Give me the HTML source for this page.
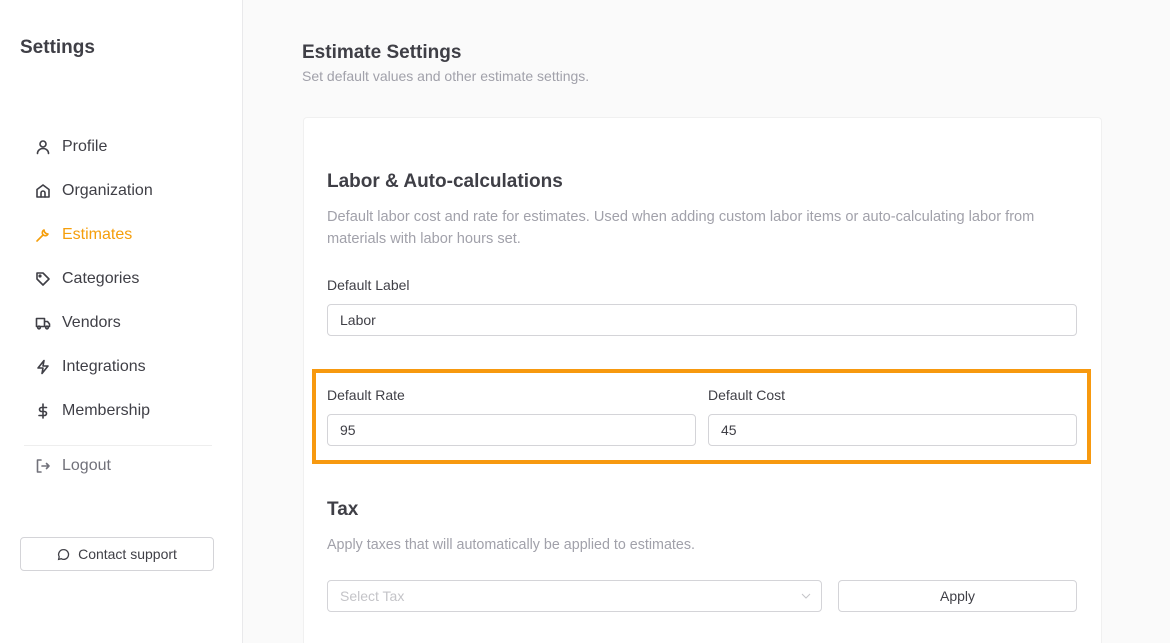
<!DOCTYPE html>
<html style="overflow:hidden;height:643px"><head><style>
*{box-sizing:border-box;margin:0;padding:0}
body{width:1170px;height:643px;overflow:hidden;font-family:"Liberation Sans",sans-serif;background:#fafafa;position:relative;color:#3f3f46}
.side{position:absolute;left:0;top:0;width:243px;height:643px;background:#fff;border-right:1px solid #e9e9eb}
.side h1{position:absolute;left:20px;top:37px;font-size:19px;font-weight:700;color:#3f3f46}
.nav{position:absolute;left:35px;font-size:16px;color:#3f3f46;display:flex;align-items:center}
.nav svg{width:16px;height:16px;margin-right:11px;fill:none;stroke:currentColor;stroke-width:1.6;stroke-linecap:round;stroke-linejoin:round}
.act{color:#f59e0b}
.sep{position:absolute;left:24px;top:445px;width:188px;border-top:1px solid #eee}
.btn{position:absolute;left:20px;top:537px;width:194px;height:34px;border:1px solid #d4d4d8;border-radius:4px;font-size:14px;display:flex;align-items:center;justify-content:center;color:#3f3f46}
.t{position:absolute}
.card{position:absolute;left:303px;top:117px;width:799px;height:526px;background:#fff;border:1px solid #f0f0f0;border-bottom:none;border-radius:4px 4px 0 0}
.inp{position:absolute;height:32px;border:1px solid #d4d4d8;border-radius:4px;font-size:14px;padding-left:12px;display:flex;align-items:center;color:#3f3f46;background:#fff}
.lbl{position:absolute;font-size:14px;color:#3f3f46}
</style></head><body>
<div class="side">
<h1>Settings</h1>
<div class="nav" style="top:138px"><svg viewBox="0 0 16 16"><circle cx="8" cy="5" r="3"/><path d="M2.5 14.5c0-3 2.5-5 5.5-5s5.5 2 5.5 5"/></svg>Profile</div>
<div class="nav" style="top:182px"><svg viewBox="0 0 16 16"><path d="M2 14V6.5L8 2l6 4.5V14z"/><path d="M6 14V10a2 2 0 014 0v4"/></svg>Organization</div>
<div class="nav act" style="top:226px"><svg viewBox="0 0 16 16"><path d="M2 14l6-6M9 3a3 3 0 104 4l-2-.5-1.5-1.5z"/></svg>Estimates</div>
<div class="nav" style="top:270px"><svg viewBox="0 0 16 16"><path d="M2 2h6l6 6-6 6-6-6z"/><circle cx="5" cy="5" r=".8"/></svg>Categories</div>
<div class="nav" style="top:314px"><svg viewBox="0 0 16 16"><path d="M1.5 3.5h8v8h-8zM9.5 6.5h3l2 2.5v2.5h-5"/><circle cx="4" cy="12.5" r="1.3"/><circle cx="12" cy="12.5" r="1.3"/></svg>Vendors</div>
<div class="nav" style="top:358px"><svg viewBox="0 0 16 16"><path d="M9 1.5L3 9h5l-1 5.5L13 7H8z"/></svg>Integrations</div>
<div class="nav" style="top:402px"><svg viewBox="0 0 16 16"><path d="M8 1v14M11.5 4.5H6.5a2 2 0 000 4h3a2 2 0 010 4H4"/></svg>Membership</div>
<div class="sep"></div>
<div class="nav" style="top:457px;color:#71717a"><svg viewBox="0 0 16 16"><path d="M6 2H2.5v12H6M7 8h7M11.5 5.5L14 8l-2.5 2.5"/></svg>Logout</div>
<div class="btn"><svg viewBox="0 0 16 16" style="width:13px;height:13px;margin-right:8px;fill:none;stroke:#3f3f46;stroke-width:1.6"><path d="M8 2a6 6 0 00-5.3 8.8L2 14l3.2-.8A6 6 0 108 2z"/></svg>Contact support</div>
</div>
<div class="t" style="left:302px;top:42px;font-size:19px;font-weight:700">Estimate Settings</div>
<div class="t" style="left:302px;top:68px;font-size:14px;color:#a1a1aa">Set default values and other estimate settings.</div>
<div class="card"></div>
<div class="t" style="left:327px;top:171px;font-size:19px;font-weight:700">Labor &amp; Auto-calculations</div>
<div class="t" style="left:327px;top:206px;width:730px;font-size:14.6px;color:#a1a1aa;line-height:22px">Default labor cost and rate for estimates. Used when adding custom labor items or auto-calculating labor from materials with labor hours set.</div>
<div class="lbl" style="left:327px;top:277px">Default Label</div>
<div class="inp" style="left:327px;top:304px;width:750px">Labor</div>
<div class="t" style="left:312px;top:369px;width:779px;height:95px;border:4px solid #f7990f"></div>
<div class="lbl" style="left:327px;top:387px">Default Rate</div>
<div class="inp" style="left:327px;top:414px;width:369px">95</div>
<div class="lbl" style="left:708px;top:387px">Default Cost</div>
<div class="inp" style="left:708px;top:414px;width:369px">45</div>
<div class="t" style="left:327px;top:499px;font-size:19px;font-weight:700">Tax</div>
<div class="t" style="left:327px;top:537px;font-size:14.3px;color:#a1a1aa">Apply taxes that will automatically be applied to estimates.</div>
<div class="inp" style="left:327px;top:580px;width:495px;color:#c4c4c8">Select Tax<svg style="position:absolute;right:10px;top:11px" width="10" height="8" viewBox="0 0 10 8"><path d="M1 2l4 4 4-4" fill="none" stroke="#c4c4c8" stroke-width="1"/></svg></div>
<div class="inp" style="left:838px;top:580px;width:239px;justify-content:center;padding:0">Apply</div>
</body></html>
